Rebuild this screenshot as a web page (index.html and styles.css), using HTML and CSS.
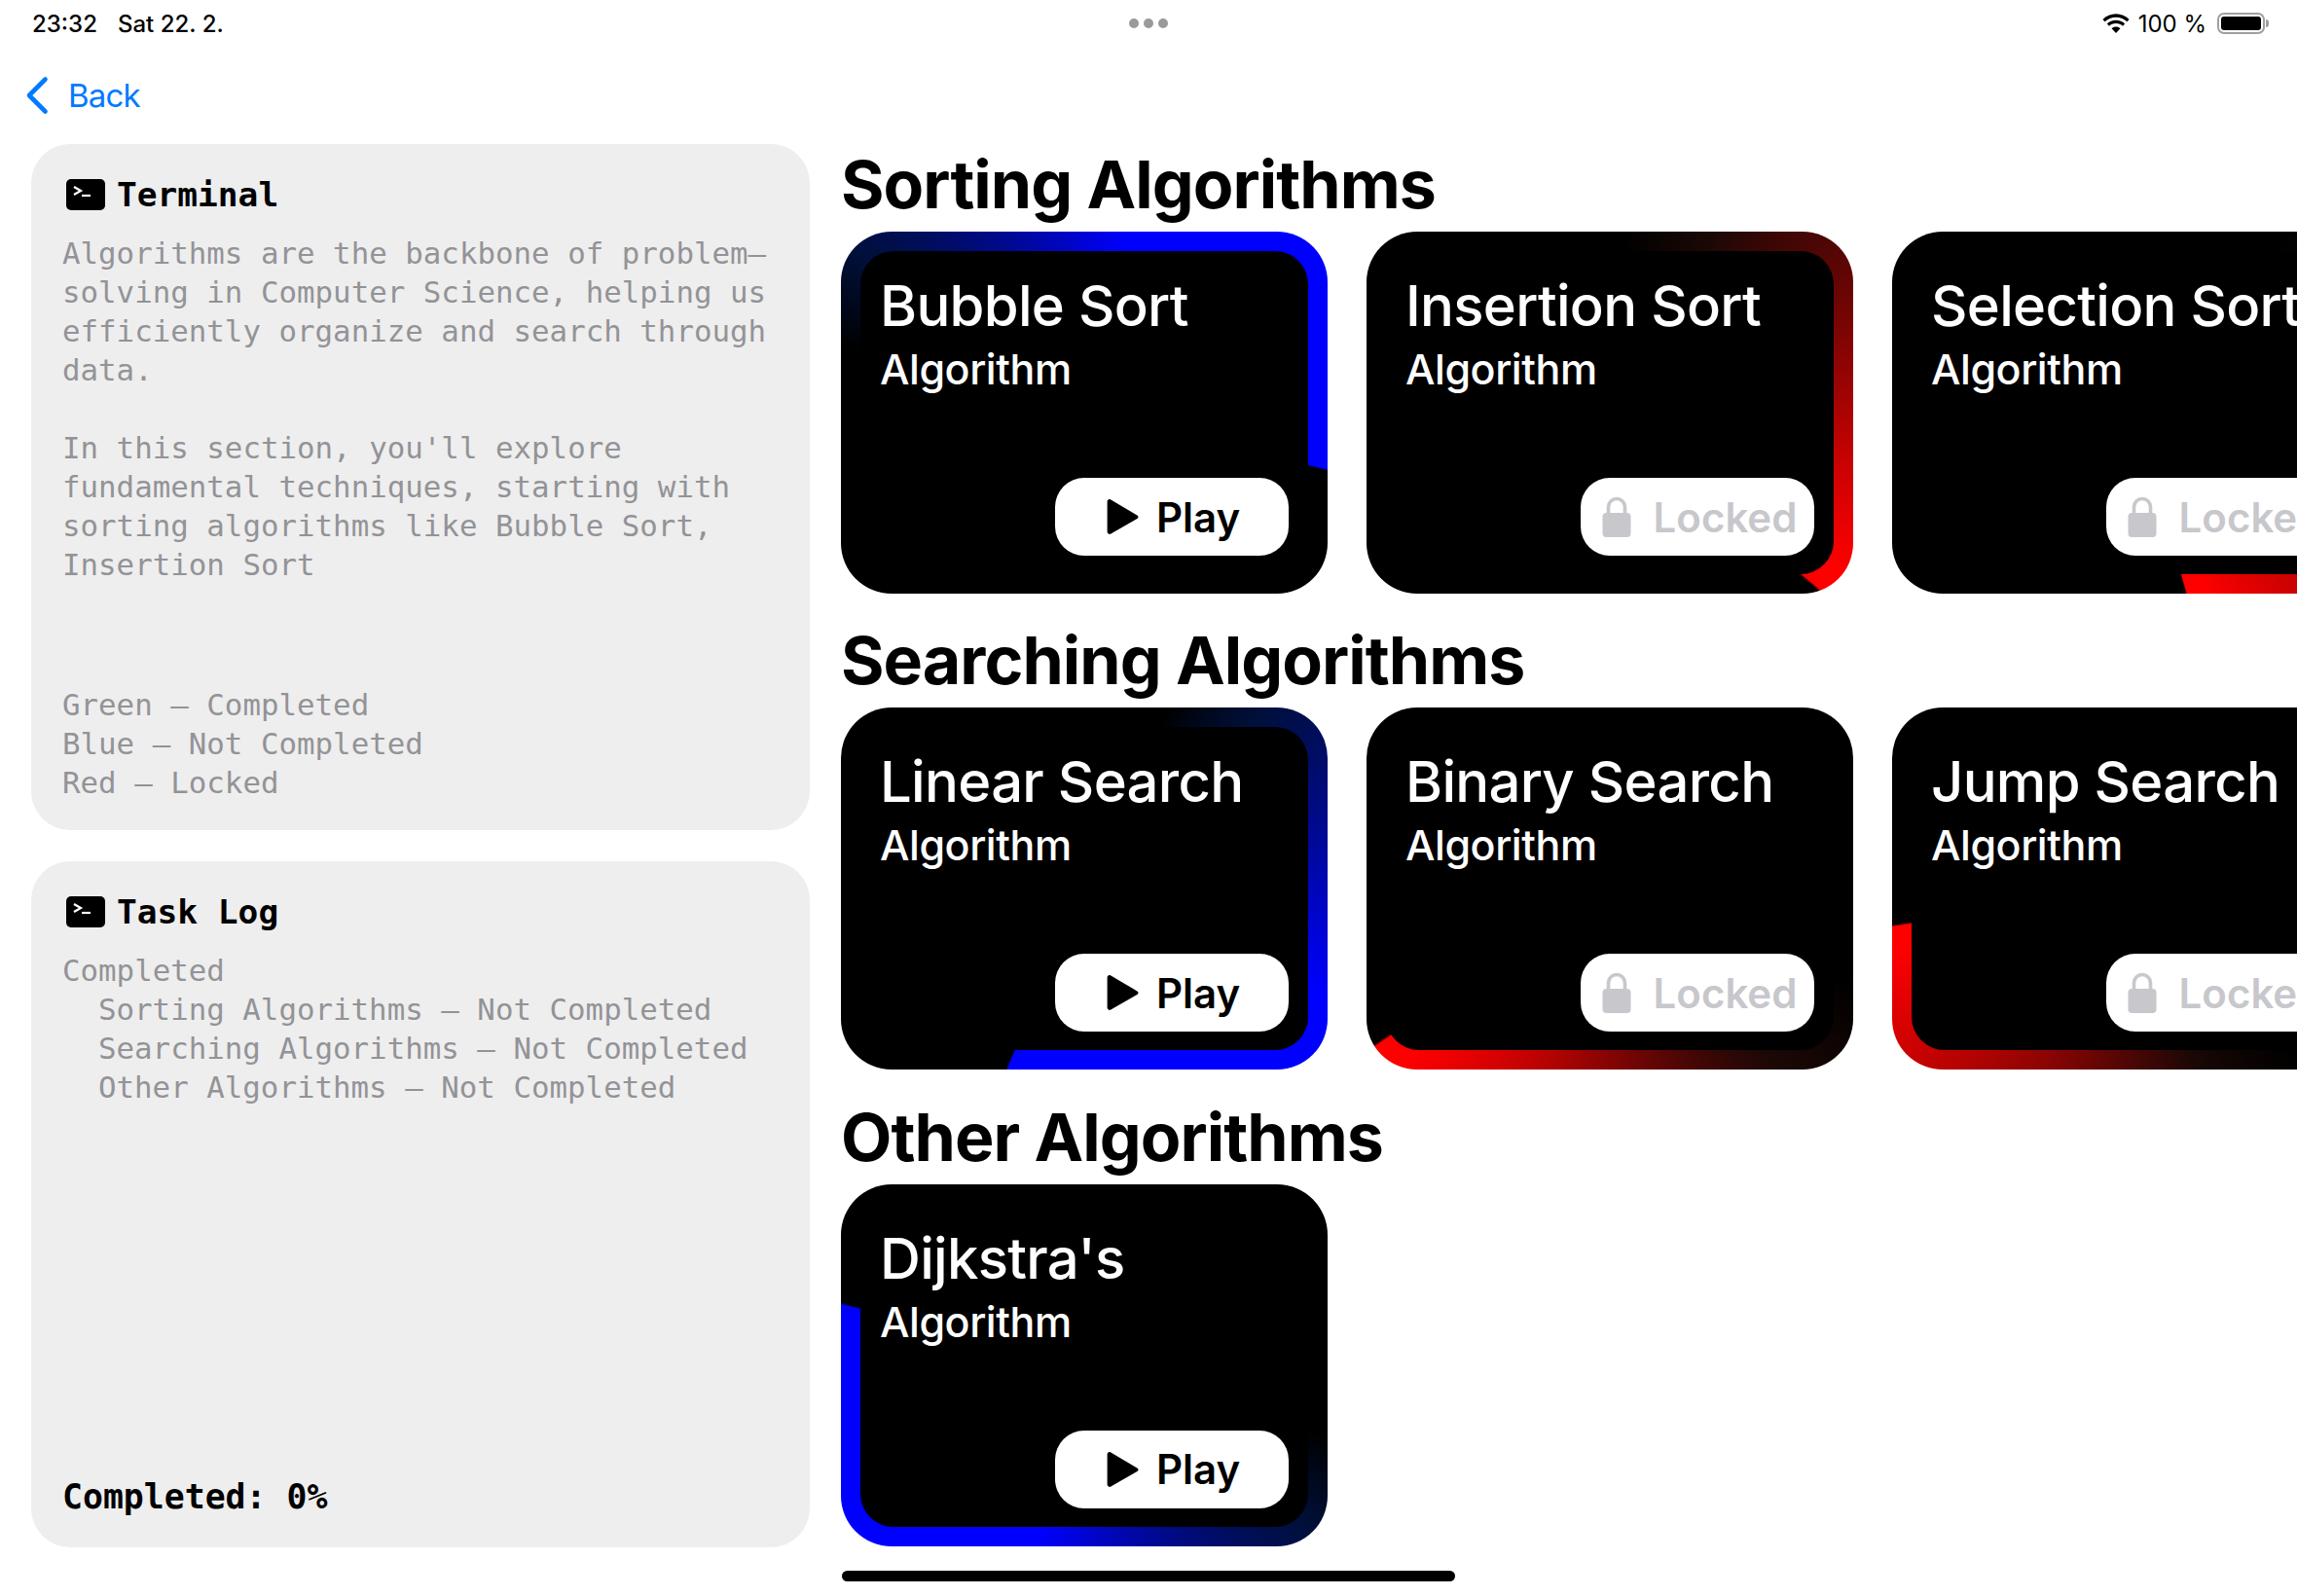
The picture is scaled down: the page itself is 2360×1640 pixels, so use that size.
FILE: index.html
```html
<!DOCTYPE html>
<html lang="en">
<head>
<meta charset="utf-8"/>
<title>Algorithms</title>
<link rel="stylesheet" href="styles.css">
</head>
<body>
<div class="status-bar">
  <div class="status-left"><span>23:32</span><span>Sat 22. 2.</span></div>
  <div class="status-dots"><i></i><i></i><i></i></div>
  <div class="status-right">
    <svg class="wifi" viewBox="2 1 24 17.500" width="28" height="20">
      <path d="M14 4.2c3.9 0 7.4 1.500 10 4l1.900-2C22.800 3.100 18.600 1.200 14 1.200S5.200 3.100 2.100 6.200l1.900 2c2.600-2.500 6.100-4 10-4z" fill="#000"/>
      <path d="M14 9.800c2.400 0 4.500.9 6.100 2.400l1.900-2C19.900 8.200 17.100 7 14 7s-5.900 1.200-8 3.200l1.900 2c1.600-1.500 3.700-2.400 6.100-2.400z" fill="#000"/>
      <path d="M14 12.800c-1.500 0-2.900.6-3.900 1.500L14 18.400l3.900-4.100c-1-.9-2.400-1.500-3.900-1.500z" fill="#000"/>
    </svg>
    <span>100 %</span>
    <div class="battery"><div class="battery-fill"></div></div>
    <div class="battery-tip"></div>
  </div>
</div>

<div class="nav">
  <svg viewBox="0 0 26 40" width="26" height="40">
    <path d="M21.500 3.500 5 20l16.500 16.500" fill="none" stroke="#007aff" stroke-width="4.600" stroke-linecap="round" stroke-linejoin="round"/>
  </svg>
  <span>Back</span>
</div>

<div class="main">
  <div class="side">
    <div class="panel">
      <div class="panel-head">
        <svg class="term-icon" viewBox="0 0 40 32" width="40" height="32">
          <rect width="40" height="32" rx="5" fill="#000"/>
          <path d="M8 8l7 4-7 4" fill="none" stroke="#fff" stroke-width="2.200"/>
          <path d="M16 17h9" stroke="#fff" stroke-width="2.200"/>
        </svg>
        <span>Terminal</span>
      </div>
      <p>Algorithms are the backbone of problem–solving in Computer Science, helping us efficiently organize and search through data.</p>
      <p class="next">In this section, you'll explore fundamental techniques, starting with sorting algorithms like Bubble Sort, Insertion Sort</p>
      <p class="legend">Green – Completed<br>Blue – Not Completed<br>Red – Locked</p>
    </div>
    <div class="panel">
      <div class="panel-head">
        <svg class="term-icon" viewBox="0 0 40 32" width="40" height="32">
          <rect width="40" height="32" rx="5" fill="#000"/>
          <path d="M8 8l7 4-7 4" fill="none" stroke="#fff" stroke-width="2.200"/>
          <path d="M16 17h9" stroke="#fff" stroke-width="2.200"/>
        </svg>
        <span>Task Log</span>
      </div>
      <p>Completed</p>
      <p class="task">Sorting Algorithms – Not Completed</p>
      <p class="task">Searching Algorithms – Not Completed</p>
      <p class="task">Other Algorithms – Not Completed</p>
      <p class="total">Completed: 0%</p>
    </div>
  </div>

  <div class="content">
    <section>
      <h1>Sorting Algorithms</h1>
      <div class="row">
        <div class="card glow-blue edge-103">
          <div class="card-inner">
            <h2>Bubble Sort</h2>
            <h3>Algorithm</h3>
            <div class="btn">
              <svg viewBox="2 1 30 34" width="33" height="36"><path d="M2 3.500C2 1.500 3.800.5 5.500 1.500l25.500 15c1.500.9 1.500 2.600 0 3.500L5.500 34.500C3.800 35.500 2 34.500 2 32.500z" fill="#000"/></svg>
              <span>Play</span>
            </div>
          </div>
        </div>
        <div class="card glow-red edge-130">
          <div class="card-inner">
            <h2>Insertion Sort</h2>
            <h3>Algorithm</h3>
            <div class="btn locked">
              <svg viewBox="0 0 30 42" width="30" height="42"><path d="M6.500 19v-8a8.500 8.500 0 0 1 17 0v8" fill="none" stroke="#c7c7cc" stroke-width="3.600"/><rect x="0.5" y="17" width="29" height="25" rx="4" fill="#c7c7cc"/></svg>
              <span>Locked</span>
            </div>
          </div>
        </div>
        <div class="card glow-red edge-164">
          <div class="card-inner">
            <h2>Selection Sort</h2>
            <h3>Algorithm</h3>
            <div class="btn locked">
              <svg viewBox="0 0 30 42" width="30" height="42"><path d="M6.500 19v-8a8.500 8.500 0 0 1 17 0v8" fill="none" stroke="#c7c7cc" stroke-width="3.600"/><rect x="0.5" y="17" width="29" height="25" rx="4" fill="#c7c7cc"/></svg>
              <span>Locked</span>
            </div>
          </div>
        </div>
      </div>
    </section>

    <section>
      <h1>Searching Algorithms</h1>
      <div class="row">
        <div class="card glow-blue edge-203">
          <div class="card-inner">
            <h2>Linear Search</h2>
            <h3>Algorithm</h3>
            <div class="btn">
              <svg viewBox="2 1 30 34" width="33" height="36"><path d="M2 3.500C2 1.500 3.800.5 5.500 1.500l25.500 15c1.500.9 1.500 2.600 0 3.500L5.500 34.500C3.800 35.500 2 34.500 2 32.500z" fill="#000"/></svg>
              <span>Play</span>
            </div>
          </div>
        </div>
        <div class="card glow-red edge-236">
          <div class="card-inner">
            <h2>Binary Search</h2>
            <h3>Algorithm</h3>
            <div class="btn locked">
              <svg viewBox="0 0 30 42" width="30" height="42"><path d="M6.500 19v-8a8.500 8.500 0 0 1 17 0v8" fill="none" stroke="#c7c7cc" stroke-width="3.600"/><rect x="0.5" y="17" width="29" height="25" rx="4" fill="#c7c7cc"/></svg>
              <span>Locked</span>
            </div>
          </div>
        </div>
        <div class="card glow-red edge-261">
          <div class="card-inner">
            <h2>Jump Search</h2>
            <h3>Algorithm</h3>
            <div class="btn locked">
              <svg viewBox="0 0 30 42" width="30" height="42"><path d="M6.500 19v-8a8.500 8.500 0 0 1 17 0v8" fill="none" stroke="#c7c7cc" stroke-width="3.600"/><rect x="0.5" y="17" width="29" height="25" rx="4" fill="#c7c7cc"/></svg>
              <span>Locked</span>
            </div>
          </div>
        </div>
      </div>
    </section>

    <section>
      <h1>Other Algorithms</h1>
      <div class="row">
        <div class="card glow-blue edge-284">
          <div class="card-inner">
            <h2>Dijkstra's</h2>
            <h3>Algorithm</h3>
            <div class="btn">
              <svg viewBox="2 1 30 34" width="33" height="36"><path d="M2 3.500C2 1.500 3.800.5 5.500 1.500l25.500 15c1.500.9 1.500 2.600 0 3.500L5.500 34.500C3.800 35.500 2 34.500 2 32.500z" fill="#000"/></svg>
              <span>Play</span>
            </div>
          </div>
        </div>
      </div>
    </section>
  </div>
</div>

<div class="home-bar"></div>
</body>
</html>
```

FILE: styles.css
```css
body {
  font-family: 'Inter', 'Liberation Sans', sans-serif;
  background: white;
  color: black;
  margin: 0;
  width: 2360px;
  height: 1640px;
  overflow: hidden;
  position: relative;
}

.status-bar {
  height: 48px;
  padding: 0 29px 0 33px;
  display: flex;
  align-items: center;
  justify-content: space-between;
  font-size: 24px;
  font-weight: 500;
}
.status-left {
  display: flex;
  gap: 21px;
  width: 400px;
}
.status-dots {
  display: flex;
  gap: 5px;
}
.status-dots i {
  width: 10px;
  height: 10px;
  border-radius: 50%;
  background: #9a9a9a;
}
.status-right {
  width: 404px;
  display: flex;
  align-items: center;
  justify-content: flex-end;
  font-weight: 400;
}
.wifi { margin-right: 9px; }
.battery {
  width: 49px;
  height: 22px;
  margin-left: 11px;
  padding: 2px;
  box-sizing: border-box;
  border: 2px solid #a0a0a0;
  border-radius: 7px;
}
.battery-fill {
  height: 100%;
  background: black;
  border-radius: 3px;
}
.battery-tip {
  width: 3px;
  height: 8px;
  margin-left: 1px;
  background: #a0a0a0;
  border-radius: 0 3px 3px 0;
}

.nav {
  height: 100px;
  padding-left: 25px;
  display: flex;
  align-items: center;
  gap: 19px;
  color: #007aff;
  font-size: 33px;
  letter-spacing: -0.8px;
}

.main {
  display: flex;
  gap: 32px;
  padding-left: 32px;
}
.side {
  width: 800px;
  flex: none;
  display: flex;
  flex-direction: column;
  gap: 32px;
}
.panel {
  height: 705px;
  box-sizing: border-box;
  padding: 32px 32px 29px;
  background: #eeeeee;
  border-radius: 40px;
  display: flex;
  flex-direction: column;
  font-family: 'DejaVu Sans Mono', 'Liberation Mono', monospace;
  font-size: 30.8px;
  line-height: 40px;
  color: #939397;
}
.panel p { margin: 0; }
.panel-head {
  display: flex;
  align-items: center;
  gap: 12px;
  padding-left: 4px;
  margin-bottom: 20px;
  color: black;
  font-size: 34.5px;
  font-weight: bold;
}
.panel p.next { margin-top: 40px; }
.panel p.legend { margin-top: auto; }
.panel p.task { padding-left: 37px; }
.panel p.total {
  margin-top: auto;
  margin-bottom: 3px;
  color: black;
  font-size: 34.8px;
  font-weight: bold;
}

.content {
  flex: 1;
  min-width: 0;
  display: flex;
  flex-direction: column;
  gap: 27.45px;
}
h1 {
  margin: 0 0 8px;
  font-size: 68px;
  line-height: 82px;
  font-weight: 700;
  letter-spacing: -0.95px;
}
.row {
  display: flex;
  gap: 40px;
}
.card {
  width: 500px;
  height: 372px;
  flex: none;
  box-sizing: border-box;
  padding: 20px;
  border-radius: 52px;
  background: black;
}
.card-inner {
  height: 100%;
  box-sizing: border-box;
  padding: 21px 20px 19px;
  border-radius: 34px;
  background: black;
  color: white;
  display: flex;
  flex-direction: column;
}
h2 {
  margin: 0 0 4px;
  font-size: 58px;
  line-height: 70px;
  font-weight: 550;
  letter-spacing: -0.7px;
  white-space: nowrap;
}
h3 {
  margin: 0;
  font-size: 43px;
  line-height: 52px;
  font-weight: 550;
  letter-spacing: -0.45px;
}
.btn {
  width: 240px;
  height: 80px;
  box-sizing: border-box;
  padding-left: 3px;
  margin-top: auto;
  align-self: flex-end;
  border-radius: 30px;
  background: white;
  color: black;
  font-size: 42px;
  font-weight: 600;
  display: flex;
  align-items: center;
  justify-content: center;
  gap: 18px;
}
.btn.locked {
  color: #c7c7cc;
  padding-left: 4px;
  gap: 23px;
}

/* angular border, --edge is where the colour stops */
.glow-blue {
  background: conic-gradient(from calc(var(--edge) - 178deg),
    black 0deg, #00103a 20deg, #0000ff 90deg, #0000ff 178deg, black 178.5deg);
}
.glow-red {
  background: conic-gradient(from calc(var(--edge) - 125deg),
    black 0deg, #1a0806 25deg, #ff0000 120deg, #ff0000 125deg, black 125.5deg);
}
.edge-103 { --edge: 103deg; }
.edge-130 { --edge: 130deg; }
.edge-164 { --edge: 164deg; }
.edge-203 { --edge: 203deg; }
.edge-236 { --edge: 236deg; }
.edge-261 { --edge: 261deg; }
.edge-284 { --edge: 284deg; }

.home-bar {
  position: absolute;
  left: 865px;
  top: 1614px;
  width: 630px;
  height: 11px;
  border-radius: 6px;
  background: black;
}
```
